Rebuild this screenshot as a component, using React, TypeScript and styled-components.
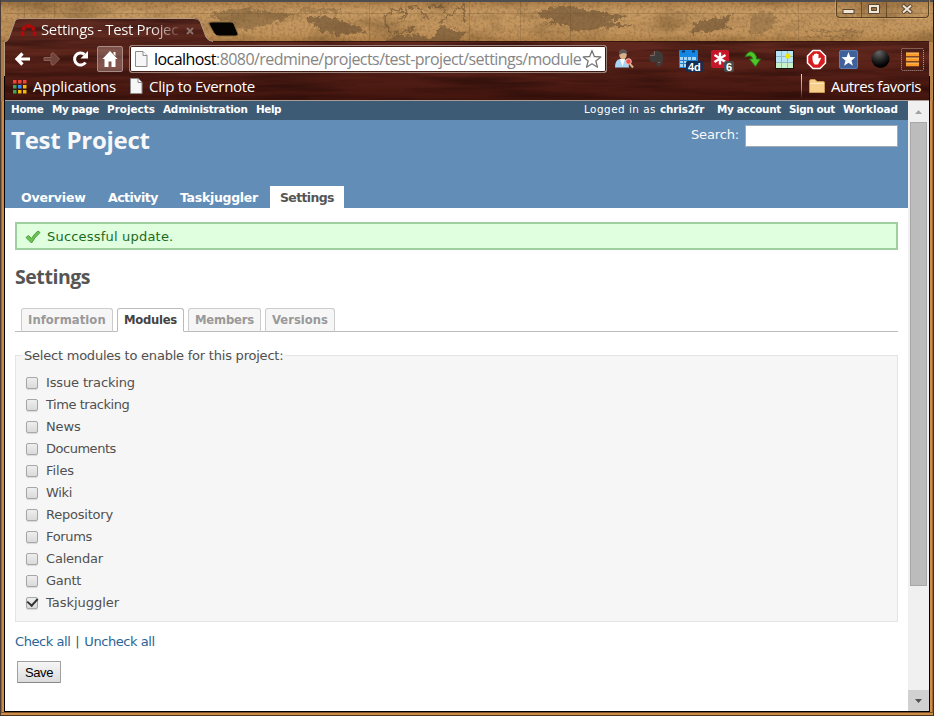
import React, { useState } from 'react';
import styled, { createGlobalStyle } from 'styled-components';

const GlobalStyle = createGlobalStyle`
  * { box-sizing: border-box; }
  body { margin: 0; overflow: hidden; background: #000; }
`;

const verdana = '"DejaVu Sans", Verdana, sans-serif';
const segoe = '"Open Sans", "Segoe UI", sans-serif';

/* ---------- window ---------- */

const Window = styled.div`
  position: relative;
  display: flex;
  flex-direction: column;
  width: 934px;
  height: 716px;
  overflow: hidden;
  background: linear-gradient(90deg, #4a3c35 0 1px, #9a6430 1px 2px, #cd8c47 2px 4px, #7c5028 4px 5px, #c68541 5px 929px, #80532a 929px 930px, #cd8c47 930px 932px, #9c6633 932px 933px, #3c3029 933px);
`;

const Chrome = styled.header`
  position: relative;
  flex: none;
  height: 101px;
  display: flex;
  flex-direction: column;
`;

const Backdrop = styled.svg`
  position: absolute;
  inset: 0;
  display: block;
`;

const TitleBar = styled.div`
  position: relative;
  display: flex;
  justify-content: space-between;
  height: 41px;
`;

const Tab = styled.div`
  display: flex;
  align-items: center;
  height: 23px;
  margin: 18px 0 0 20px;
`;

const TabTitle = styled.span`
  width: 138px;
  margin-left: 4px;
  white-space: nowrap;
  font: 15px/23px ${segoe};
  letter-spacing: -0.36px;
  color: transparent;
  background: linear-gradient(90deg, #fff 108px, rgba(255, 255, 255, 0.15));
  background-clip: text;
`;

const TabClose = styled.svg`
  margin: 3px 0 0 7px;
`;

const WindowButtons = styled.div`
  display: flex;
  width: 93px;
  height: 18px;
  margin-right: 5px;
  border: 1px solid #59401f;
  border-top: 0;
  border-radius: 0 0 4px 4px;
  box-shadow: 0 0 0 1px rgba(235, 190, 130, 0.4);
`;

const WindowButton = styled.span<{ $w: number }>`
  display: flex;
  align-items: center;
  justify-content: center;
  width: ${(p) => p.$w}px;
  & + & { border-left: 1px solid #6b4d29; }
`;

const Toolbar = styled.div`
  position: relative;
  display: flex;
  align-items: center;
  height: 35px;
  padding-left: 12px;
`;

const NavIcon = styled.svg`
  flex: none;
  width: 20px;
  height: 20px;
  margin-right: 9px;
`;

const HomeButton = styled.span`
  display: flex;
  align-items: center;
  justify-content: center;
  flex: none;
  width: 26px;
  height: 26px;
  margin: 0 6px 0 -2px;
  border: 1px solid #a98b84;
  border-radius: 2px;
  background: rgba(255, 235, 230, 0.25);
`;

const AddressBar = styled.div`
  display: flex;
  align-items: center;
  flex: none;
  width: 478px;
  height: 28px;
  padding: 0 2px 0 5px;
  background: #fff;
  border: 1px solid #9b8177;
  border-radius: 3px;
  box-shadow: inset 0 0 0 1px #3d1a13;
`;

const Url = styled.span`
  flex: none;
  width: 428px;
  margin-left: 6px;
  white-space: nowrap;
  font: 16px/24px ${segoe};
  letter-spacing: -0.56px;
  color: #858585;
`;

const Host = styled.span`
  color: #000;
`;

const Extensions = styled.div`
  display: flex;
  align-items: center;
  gap: 8px;
  margin-left: 5px;
`;

const Extension = styled.svg`
  flex: none;
  width: 24px;
  height: 24px;
  overflow: visible;
`;

const BadgeText = styled.text`
  font: bold 11px "Liberation Sans", Arial, sans-serif;
  fill: #fff;
`;

const Bookmarks = styled.div`
  position: relative;
  display: flex;
  align-items: center;
  height: 24px;
  padding: 0 13px 4px 12px;
`;

const Bookmark = styled.span<{ $gap: number; $track: number }>`
  font: 15px/20px ${segoe};
  letter-spacing: ${(p) => p.$track}px;
  color: #fff;
  white-space: nowrap;
  margin: 0 ${(p) => p.$gap}px 0 6px;
`;

const BookmarkDivider = styled.span`
  width: 1px;
  height: 24px;
  margin: 0 7px 0 auto;
  background: linear-gradient(#d9dde4, #8b95a6 60%, #20202a);
`;

/* ---------- viewport ---------- */

const Viewport = styled.div`
  display: flex;
  flex: none;
  height: 611px;
  margin: 0 4px;
  border: solid #000;
  border-width: 0 1px 1px;
`;

const BottomFrame = styled.div`
  height: 4px;
  margin: 0 1px;
  background: linear-gradient(#7d5129 0 1px, #cf8c45 1px 3px, #4a3421 3px);
`;

const Page = styled.div`
  flex: none;
  width: 903px;
  background: #fff;
  font-family: ${verdana};
  color: #505050;
`;

const TopMenu = styled.nav`
  display: flex;
  justify-content: space-between;
  height: 19px;
  padding: 0 10px 0 6px;
  background: #3e5b76;
`;

const MenuGroup = styled.div`
  display: flex;
`;

const MenuItem = styled.a<{ $w: number; $track: number; $plain?: boolean }>`
  width: ${(p) => p.$w}px;
  font: ${(p) => (p.$plain ? 'normal' : 'bold')} 10.4px/17px ${verdana};
  letter-spacing: ${(p) => p.$track}px;
  color: #fff;
  white-space: nowrap;
`;

const Header = styled.div`
  display: flex;
  flex-direction: column;
  justify-content: space-between;
  height: 88px;
  background: #628db6;
`;

const HeaderTop = styled.div`
  display: flex;
  justify-content: space-between;
  padding: 5px 10px 0 6px;
`;

const ProjectTitle = styled.h1`
  margin: -1px 0 0;
  font: bold 24px/31px ${segoe};
  letter-spacing: -0.25px;
  color: #f8f8f8;
`;

const SearchBox = styled.label`
  display: flex;
  align-items: flex-start;
  font: 13px/19px ${verdana};
  letter-spacing: -0.15px;
  color: #f8f8f8;
`;

const SearchInput = styled.input`
  width: 153px;
  height: 22px;
  margin-left: 6px;
  padding: 0;
  border: 1px solid #a2aab3;
  border-radius: 0;
  background: #fff;
  outline: 0;
`;

const MainMenu = styled.nav`
  display: flex;
  padding-left: 6px;
`;

const MainTab = styled.a<{ $w: number; $track: number; $active?: boolean }>`
  width: ${(p) => p.$w}px;
  height: 22px;
  margin-right: 2px;
  padding-left: 10px;
  font: bold 12.5px/24px ${verdana};
  letter-spacing: ${(p) => p.$track}px;
  white-space: nowrap;
  color: ${(p) => (p.$active ? '#555' : '#fff')};
  background: ${(p) => (p.$active ? '#fff' : 'transparent')};
`;

const Content = styled.main`
  padding: 14px 10px 0;
`;

const Flash = styled.div`
  display: flex;
  align-items: center;
  height: 28px;
  padding-left: 8px;
  border: 2px solid #9fcf9f;
  background: #dfffdf;
  color: #1b6b1b;
  font-size: 13px;
  letter-spacing: 0.2px;
`;

const FlashIcon = styled.svg`
  margin: 2px 6px 0 0;
`;

const SectionTitle = styled.h2`
  margin: 12px 0 17px;
  font: bold 19.5px/29px ${segoe};
  letter-spacing: -0.45px;
  color: #555;
`;

const SubTabs = styled.div`
  display: flex;
  gap: 4px;
  height: 24px;
  padding-left: 6px;
  border-bottom: 1px solid #bbb;
`;

const SubTab = styled.a<{ $w: number; $track: number; $active?: boolean }>`
  width: ${(p) => p.$w}px;
  height: 24px;
  padding-left: 6px;
  border: 1px solid ${(p) => (p.$active ? '#bbb' : '#ccc')};
  border-bottom-color: ${(p) => (p.$active ? '#fff' : '#bbb')};
  border-radius: 3px 3px 0 0;
  background: ${(p) => (p.$active ? '#fff' : '#f6f6f6')};
  font: bold 11.6px/23px ${verdana};
  letter-spacing: ${(p) => p.$track}px;
  color: ${(p) => (p.$active ? '#444' : '#999')};
  white-space: nowrap;
`;

const ModuleBox = styled.fieldset`
  height: 276px;
  margin: 14px 0 0;
  padding: 7px 10px 0;
  border: 1px solid #e4e4e4;
  background: #f6f6f6;
`;

const Legend = styled.legend`
  margin-left: -4px;
  padding: 1px 2px 0;
  font-size: 13px;
  line-height: 17px;
  letter-spacing: -0.22px;
`;

const ModuleRow = styled.label`
  display: flex;
  align-items: center;
  height: 22px;
`;

const Check = styled.input`
  appearance: none;
  display: grid;
  place-content: center;
  width: 12px;
  height: 12px;
  margin: 1px 8px 0 0;
  border: 1px solid #a6a6a6;
  border-radius: 2px;
  background: linear-gradient(#eee, #dadada);
  box-shadow: 0 1px 1px rgba(0, 0, 0, 0.12);
  &:checked::before {
    content: '';
    width: 5px;
    height: 8px;
    margin-top: -3px;
    border: solid #333;
    border-width: 0 2px 2px 0;
    transform: rotate(42deg);
  }
`;

const ModuleName = styled.span<{ $track: number }>`
  font-size: 13px;
  letter-spacing: ${(p) => p.$track}px;
`;

const Links = styled.p`
  display: flex;
  gap: 5px;
  margin: 11px 0 10px;
  font-size: 13px;
  line-height: 18px;
  letter-spacing: -0.44px;
`;

const Link = styled.a`
  color: #2a6496;
  cursor: pointer;
`;

const SaveButton = styled.button`
  display: block;
  width: 44px;
  height: 22px;
  margin-left: 2px;
  padding: 0;
  border: 1px solid #a0a0a0;
  border-bottom-color: #888;
  border-radius: 1px;
  background: linear-gradient(#f6f6f6, #dcdcdc);
  font: 13px/19px "Liberation Sans", Arial, sans-serif;
  letter-spacing: -0.35px;
  color: #000;
`;

const ScrollBar = styled.div`
  display: flex;
  flex-direction: column;
  align-items: center;
  width: 21px;
  background: #f0f0f0;
`;

const ScrollArrow = styled.span<{ $filled?: boolean }>`
  display: grid;
  place-items: center;
  width: 21px;
  height: 21px;
  background: ${(p) => (p.$filled ? '#d1d1d1' : 'transparent')};
`;

const Thumb = styled.span`
  width: 17px;
  height: 464px;
  margin: 0 0 auto;
  border: 1px solid #a8a8a8;
  background: #bcbcbc;
`;

/* ---------- drawings ---------- */

const woodShape =
  'M0 101V42H5Q8 41 9 38L15 21Q16 18 20 18H194Q198 18 200 21L206 37Q208 41 213 41H930V101Z';

function ThemeArt() {
  return (
    <Backdrop width="934" height="101" viewBox="0 0 934 101">
      <defs>
        <filter id="parchment" x="0" y="0" width="100%" height="100%" colorInterpolationFilters="sRGB">
          <feTurbulence type="fractalNoise" baseFrequency="0.02 0.05" numOctaves="5" seed="8" />
          <feColorMatrix values="0 0 0 0 0.38  0 0 0 0 0.27  0 0 0 0 0.14  2.5 0 0 0 -1.1" />
        </filter>
        <filter id="speckle" x="0" y="0" width="100%" height="100%" colorInterpolationFilters="sRGB">
          <feTurbulence type="fractalNoise" baseFrequency="0.35" numOctaves="3" seed="3" />
          <feColorMatrix values="0 0 0 0 0.38  0 0 0 0 0.26  0 0 0 0 0.13  3 0 0 0 -1.3" />
        </filter>
        <filter id="ink" x="-5%" y="-20%" width="110%" height="140%">
          <feTurbulence type="fractalNoise" baseFrequency="0.2" numOctaves="3" seed="2" />
          <feDisplacementMap in="SourceGraphic" scale="9" xChannelSelector="R" yChannelSelector="G" />
        </filter>
        <filter id="grain" x="0" y="0" width="100%" height="100%" colorInterpolationFilters="sRGB">
          <feTurbulence type="fractalNoise" baseFrequency="0.009 0.13" numOctaves="4" seed="5" />
          <feColorMatrix values="0 0 0 0 0.13  0 0 0 0 0.04  0 0 0 0 0.03  2.2 0 0 0 -0.85" />
        </filter>
        <linearGradient id="tan" x1="0" y1="0" x2="0" y2="1">
          <stop offset="0" stopColor="#a87a45" />
          <stop offset="0.25" stopColor="#c69a63" />
          <stop offset="0.8" stopColor="#c2945c" />
          <stop offset="1" stopColor="#ab7d45" />
        </linearGradient>
        <linearGradient id="wood" x1="0" y1="0" x2="0" y2="1">
          <stop offset="0" stopColor="#602d23" />
          <stop offset="0.5" stopColor="#5e251b" />
          <stop offset="1" stopColor="#42150e" />
        </linearGradient>
        <clipPath id="woodClip">
          <path d={woodShape} />
        </clipPath>
      </defs>
      <rect width="934" height="42" fill="url(#tan)" />
      <rect width="934" height="42" filter="url(#parchment)" opacity="0.4" />
      <rect width="934" height="42" filter="url(#speckle)" opacity="0.25" />
      <path
        d="M24.500 3V18M54.500 3V18M369.500 2V41M469.500 2V41M520.500 2V41M570.500 2V41M798.500 2V41M5 13.500H934"
        stroke="#6a5030"
        strokeWidth="0.700"
        opacity="0.4"
      />
      <g filter="url(#ink)" opacity="0.6">
        <path
          d="M390 33c-12-14 0-28 14-22 5 4 0 10-5 7m8-9c10-6 19 2 20 12m2-12c6-7 16-3 17 5m-6 8 24-18v20M390 37c12-7 18-3 27-11"
          fill="none"
          stroke="#6a5030"
          strokeWidth="1.800"
        />
        <g fill="#6a5030">
          <path d="M390 38q20-7 43 0l8-14q10 8 26 7l-8 8 25 6H385z" />
          <path d="M535 14q25-12 50-4l42 6-18 6 28 4-34 2-26 4-12-7-22-1 14-3z" />
          <path d="M694 22l41-7-10 8 6 5-38 6z M305 20q18-10 43 4l20 8-30 3-16-5z" />
          <path d="M210 16q22-12 50-6l36 4-18 8-34 8z" opacity="0.7" />
          <path d="M750 16q16-8 28 2l-12 16h-16z M300 8h40v4h-40z M805 30h60v2h-60z M805 36h54v2h-54z" opacity="0.5" />
        </g>
      </g>
      <rect width="934" height="2" fill="#4e4d50" />
      <rect x="933" width="1" height="101" fill="#1e1a19" />
      <path d="M929 42h4v59h-4z" fill="#b8854c" />
      <path
        d="M212 22H231Q233 22 234 24L238 34Q238 36 236 36H219Q216 36 214 33L209 24Q208 22 212 22Z"
        fill="#050403"
        stroke="#8a683d"
      />
      <g clipPath="url(#woodClip)">
        <rect x="4" y="17" width="925" height="84" fill="url(#wood)" />
        <rect x="4" y="17" width="925" height="84" filter="url(#grain)" opacity="0.6" />
      </g>
      <rect y="42" width="4" height="59" fill="#b07b42" />
      <rect width="1" height="101" fill="#4a3c35" />
      <path
        d="M4.500 101V42Q8 41 9 38L15 21Q16 18.500 20 18.500H194Q198 18.500 200 21L206 37Q208 41 213 41.500"
        fill="none"
        stroke="#b49b80"
      />
      <path d="M213 41.500H929" stroke="#3a170e" />
      <path d="M4.500 76V101M929.500 76V101" stroke="#000" />
      <path d="M5 100.500H929" stroke="#a89c98" />
    </Backdrop>
  );
}

const NavBack = () => (
  <NavIcon viewBox="0 0 20 20">
    <path d="M18 10H5.500M10.500 4.500 5 10 10.500 15.500" fill="none" stroke="#fff" strokeWidth="3.200" />
  </NavIcon>
);

const NavForward = () => (
  <NavIcon viewBox="0 0 20 20">
    <path d="M3 8.500H10V5L12 3.500 18.500 10 12 16.500 10 15V11.500H3z" fill="#70443b" stroke="#8b5f55" />
  </NavIcon>
);

const Reload = () => (
  <NavIcon viewBox="0 0 20 20">
    <path d="M15.500 13.500A6 6 0 1 1 14.500 5.500" fill="none" stroke="#fff" strokeWidth="3" />
    <path d="M18 2V9.500H10.500z" fill="#fff" />
  </NavIcon>
);

const HomeIcon = () => (
  <svg width="18" height="18" viewBox="0 0 18 18">
    <path d="M9 1 16.500 9H14.500V17H10.500V11.500H7.500V17H3.500V9H1.500Z M12.500 2h2v4l-2-2z" fill="#fff" />
  </svg>
);

const PageIcon = () => (
  <svg width="13" height="16" viewBox="0 0 13 16">
    <path d="M.5.500H8L12 4.500V15.500H.5Z" fill="#f6f6f6" stroke="#8b8b8b" />
    <path d="M8 .5V4.500H12" fill="#fff" stroke="#8b8b8b" />
  </svg>
);

const Star = () => (
  <svg width="20" height="20" viewBox="0 0 20 20">
    <path
      d="M10 1.500 12.300 7.500 18.800 7.900 13.800 12 15.500 18.200 10 14.800 4.500 18.200 6.200 12 1.200 7.900 7.700 7.500Z"
      fill="#fff"
      stroke="#777"
      strokeWidth="1.300"
      strokeLinejoin="round"
    />
  </svg>
);

const ExtensionIcons = () => (
  <Extensions>
    <Extension viewBox="0 0 24 24">
      <path d="M3 20.500q0-8 5-8.500h4q5 1 5 8.500z" fill="#a9d5f5" />
      <path d="M8 12l2.500 7 2.500-7z" fill="#fff" />
      <ellipse cx="11" cy="7.500" rx="3.800" ry="4.800" fill="#d9b08c" />
      <path d="M7 8q-1-6 4-5.500 5 0 4 5-3-3-8 .5z" fill="#5c5552" />
      <path d="M18 17l3 3.500" stroke="#d9b08c" strokeWidth="2" />
      <circle cx="16.500" cy="14.500" r="2.800" fill="#ea5149" stroke="#f4c8c2" />
    </Extension>
    <Extension viewBox="0 0 24 24">
      <path d="M6 8l4-4q4-1 6 1 3 0 3 6 0 8-4.500 8.500-3-.5-2-4l-3 0-3-1q-2-3-.5-6.500z" fill="#3f3b39" />
      <path d="M6 8.500h4.500V4M14 16q1-2 2 0" fill="none" stroke="#7d655d" />
    </Extension>
    <Extension viewBox="0 0 24 24">
      <rect x="3" y="3" width="19" height="18" rx="1" fill="#1587e2" />
      <path d="M4 10h16v10H4z" fill="#a5d6f8" />
      <path d="M4 13.500h16M4 16.500h16M7.500 10v10M11.500 10v10M15.500 10v10" stroke="#1e83d4" />
      <path d="M6 4.500h3M16 4.500h3" stroke="#073c72" strokeWidth="2" />
      <rect x="10" y="14" width="17" height="11" rx="2" fill="#142e54" />
      <BadgeText x="12" y="23.500">4d</BadgeText>
    </Extension>
    <Extension viewBox="0 0 24 24">
      <rect x="3" y="3" width="18" height="18" rx="2" fill="#c51729" />
      <path d="M12 5.500v12M6.500 8l11 7M17.500 8l-11 7" stroke="#fff" strokeWidth="2.400" />
      <rect x="16" y="14" width="10" height="11" rx="2" fill="#4b4b4b" />
      <BadgeText x="18" y="23.500">6</BadgeText>
    </Extension>
    <Extension viewBox="0 0 24 24">
      <path d="M5 10Q9 2 14 6q3 3 2.500 6h4l-5 7.500-6-7.500h3Q12 7 5 10Z" fill="#4fc529" stroke="#267b14" />
    </Extension>
    <Extension viewBox="0 0 24 24">
      <rect x="3.500" y="3.500" width="18" height="18" fill="#b9e4f4" stroke="#161616" />
      <path d="M4 15h17v6H4z" fill="#c9f2cb" />
      <path d="M9.500 4v17M15.500 4v17M4 9.500h17M4 15.500h17" stroke="#8fb9c4" />
      <circle cx="16" cy="9" r="2.500" fill="#eee400" />
    </Extension>
    <Extension viewBox="0 0 24 24">
      <path d="M9 3.500h7l5.500 5.500v7L16 21.500H9L3.500 16V9z" fill="#d91c1e" stroke="#fff" strokeWidth="1.500" />
      <path d="M8.500 12V8.500H10V7h1.500V6.500H13V7h1.500v4.500l2-1 .5 1-3 6H10.500q-2-2-2-5.500z" fill="#fff" />
    </Extension>
    <Extension viewBox="0 0 24 24">
      <rect x="3.500" y="3.500" width="18" height="18" rx="1.500" fill="#40629c" stroke="#5d7cb0" />
      <path d="M12.500 5 14.300 10 19.500 10.300 15.500 13.500 16.900 18.700 12.500 15.800 8.100 18.700 9.500 13.500 5.500 10.300 10.700 10Z" fill="#fff" />
    </Extension>
    <Extension viewBox="0 0 24 24">
      <defs>
        <radialGradient id="orb" cx="0.4" cy="0.15" r="0.75">
          <stop stopColor="#666" />
          <stop offset="0.6" stopColor="#242424" />
          <stop offset="1" stopColor="#000" />
        </radialGradient>
      </defs>
      <circle cx="12.500" cy="12" r="9" fill="url(#orb)" />
    </Extension>
    <Extension viewBox="0 0 24 24">
      <rect x="1.500" y="1.500" width="22" height="22" rx="1" fill="none" stroke="#b49c94" strokeDasharray="1 1" />
      <path d="M6 7.500h13M6 12.500h13M6 17.500h13" stroke="#fa9a27" strokeWidth="3.500" />
      <path d="M6 6h13M6 11h13M6 16h13" stroke="#ffd18b" strokeWidth="0.800" />
    </Extension>
  </Extensions>
);

const appColors = ['#f04438', '#f04438', '#f04438', '#3aa757', '#3c8bf0', '#f2b90a', '#3aa757', '#f2b90a', '#f2b90a'];

const AppsIcon = () => (
  <svg width="15" height="15" viewBox="0 0 15 15">
    {appColors.map((c, i) => (
      <rect key={i} x={1 + (i % 3) * 5} y={1 + Math.floor(i / 3) * 5} width="3.500" height="3.500" fill={c} />
    ))}
  </svg>
);

const FolderIcon = () => (
  <svg width="16" height="14" viewBox="0 0 16 14">
    <path d="M.5 2.500Q.5.500 2 .5H6L8 2.500H14.500Q15.500 2.500 15.500 4V13.500H.5Z" fill="#f6cf8b" stroke="#c99a55" />
    <path d="M1 4.500H15" stroke="#ffe9bd" />
  </svg>
);

/* ---------- data ---------- */

const leftMenu: [string, number, number][] = [
  ['Home', 41, -0.3],
  ['My page', 55, -0.4],
  ['Projects', 56, 0.02],
  ['Administration', 93, -0.17],
  ['Help', 30, -0.4],
];
const rightMenu: [string, number, number, boolean?][] = [
  ['Logged in as', 76, 0.5, true],
  ['chris2fr', 57, -0.15],
  ['My account', 72, -0.3],
  ['Sign out', 54, -0.38],
  ['Workload', 55, -0.08],
];
const moduleNames: [string, number][] = [
  ['Issue tracking', -0.14],
  ['Time tracking', -0.45],
  ['News', -0.15],
  ['Documents', -0.48],
  ['Files', -0.1],
  ['Wiki', -0.3],
  ['Repository', -0.22],
  ['Forums', -0.35],
  ['Calendar', -0.2],
  ['Gantt', -0.3],
  ['Taskjuggler', -0.03],
];

export default function App() {
  const [enabled, setEnabled] = useState<string[]>(['Taskjuggler']);
  const toggle = (name: string) =>
    setEnabled((list) => (list.includes(name) ? list.filter((n) => n !== name) : [...list, name]));

  return (
    <Window>
      <GlobalStyle />
      <Chrome>
        <ThemeArt />
        <TitleBar>
          <Tab>
            <svg width="17" height="14" viewBox="0 0 17 14">
              <path d="M2.500 13V10Q3 3 8.500 3T14.500 10V13" fill="none" stroke="#b50808" strokeWidth="3.500" strokeDasharray="4.500 1" />
            </svg>
            <TabTitle>Settings - Test Projec</TabTitle>
            <TabClose width="8" height="8" viewBox="0 0 8 8">
              <path d="M1 1 7 7M7 1 1 7" stroke="#8c7069" strokeWidth="2" />
            </TabClose>
          </Tab>
          <WindowButtons>
            <WindowButton $w={25}>
              <svg width="14" height="10" viewBox="0 0 14 10">
                <rect x="1" y="5.500" width="11" height="4" fill="#f0e6d8" stroke="#5b4630" />
              </svg>
            </WindowButton>
            <WindowButton $w={25}>
              <svg width="12" height="10" viewBox="0 0 12 10">
                <path d="M.5.500H11.500V9.500H.5Z M3.500 3.500H8.500V6.500H3.500Z" fill="#f0e6d8" fillRule="evenodd" stroke="#5b4630" />
              </svg>
            </WindowButton>
            <WindowButton $w={43}>
              <svg width="12" height="10" viewBox="0 0 12 10">
                <path d="M1.500 1 10.500 9M10.500 1 1.500 9" stroke="#5b4630" strokeWidth="4" />
                <path d="M2 1.400 10 8.600M10 1.400 2 8.600" stroke="#f0e6d8" strokeWidth="2" />
              </svg>
            </WindowButton>
          </WindowButtons>
        </TitleBar>
        <Toolbar>
          <NavBack />
          <NavForward />
          <Reload />
          <HomeButton>
            <HomeIcon />
          </HomeButton>
          <AddressBar>
            <PageIcon />
            <Url>
              <Host>localhost</Host>:8080/redmine/projects/test-project/settings/module
            </Url>
            <Star />
          </AddressBar>
          <ExtensionIcons />
        </Toolbar>
        <Bookmarks>
          <AppsIcon />
          <Bookmark $gap={14} $track={-0.2}>Applications</Bookmark>
          <PageIcon />
          <Bookmark $gap={0} $track={-0.3}>Clip to Evernote</Bookmark>
          <BookmarkDivider />
          <FolderIcon />
          <Bookmark $gap={0} $track={-0.47}>Autres favoris</Bookmark>
        </Bookmarks>
      </Chrome>
      <Viewport>
        <Page>
          <TopMenu>
            <MenuGroup>
              {leftMenu.map(([label, w, track]) => (
                <MenuItem key={label} $w={w} $track={track}>{label}</MenuItem>
              ))}
            </MenuGroup>
            <MenuGroup>
              {rightMenu.map(([label, w, track, plain]) => (
                <MenuItem key={label} $w={w} $track={track} $plain={plain}>{label}</MenuItem>
              ))}
            </MenuGroup>
          </TopMenu>
          <Header>
            <HeaderTop>
              <ProjectTitle>Test Project</ProjectTitle>
              <SearchBox>
                Search:
                <SearchInput />
              </SearchBox>
            </HeaderTop>
            <MainMenu>
              <MainTab $w={85} $track={-0.15}>Overview</MainTab>
              <MainTab $w={70} $track={-0.5}>Activity</MainTab>
              <MainTab $w={98} $track={-0.3}>Taskjuggler</MainTab>
              <MainTab $w={74} $track={-0.65} $active>Settings</MainTab>
            </MainMenu>
          </Header>
          <Content>
            <Flash>
              <FlashIcon width="16" height="14" viewBox="0 0 16 14">
                <path d="M1 7.500 3.500 5.500 6.500 8.500Q9 4 13 1L15 2.500Q10 7 6.500 13Z" fill="#6cc551" stroke="#4a9c3d" />
              </FlashIcon>
              Successful update.
            </Flash>
            <SectionTitle>Settings</SectionTitle>
            <SubTabs>
              <SubTab $w={92} $track={0.07}>Information</SubTab>
              <SubTab $w={67} $track={-0.26} $active>Modules</SubTab>
              <SubTab $w={73} $track={-0.2}>Members</SubTab>
              <SubTab $w={70} $track={0}>Versions</SubTab>
            </SubTabs>
            <ModuleBox>
              <Legend>Select modules to enable for this project:</Legend>
              {moduleNames.map(([name, track]) => (
                <ModuleRow key={name}>
                  <Check type="checkbox" checked={enabled.includes(name)} onChange={() => toggle(name)} />
                  <ModuleName $track={track}>{name}</ModuleName>
                </ModuleRow>
              ))}
            </ModuleBox>
            <Links>
              <Link onClick={() => setEnabled(moduleNames.map(([n]) => n))}>Check all</Link>|
              <Link onClick={() => setEnabled([])}>Uncheck all</Link>
            </Links>
            <SaveButton>Save</SaveButton>
          </Content>
        </Page>
        <ScrollBar>
          <ScrollArrow>
            <svg width="7" height="4" viewBox="0 0 7 4"><path d="M0 4 3.500 0 7 4Z" fill="#a3a3a3" /></svg>
          </ScrollArrow>
          <Thumb />
          <ScrollArrow $filled>
            <svg width="7" height="4" viewBox="0 0 7 4"><path d="M0 0H7L3.500 4Z" fill="#505050" /></svg>
          </ScrollArrow>
        </ScrollBar>
      </Viewport>
      <BottomFrame />
    </Window>
  );
}
